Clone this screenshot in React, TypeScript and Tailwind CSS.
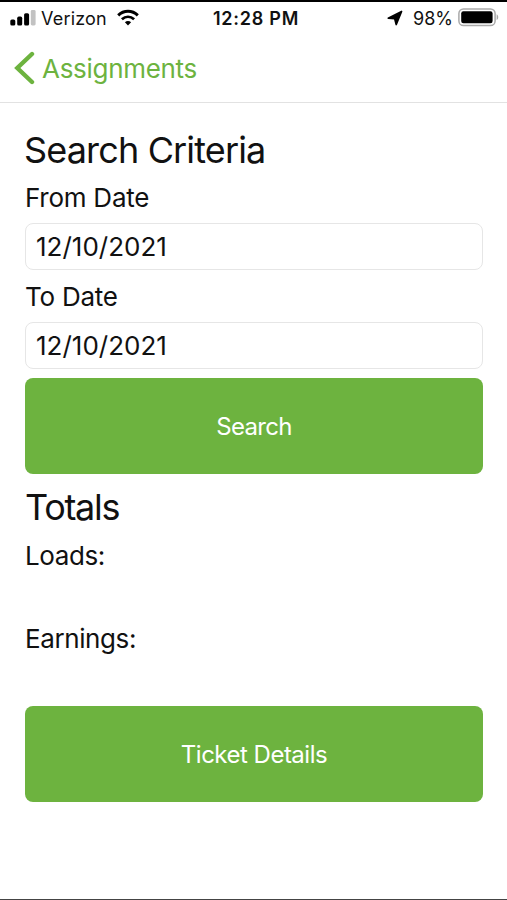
function SignalIcon() {
  return (
    <svg width="26" height="17" viewBox="0 0 26 17" aria-hidden="true">
      <rect x="0.3" y="10.5" width="5" height="6" rx="1.6" fill="#000" />
      <rect x="7.2" y="7.6" width="5" height="8.9" rx="1.6" fill="#000" />
      <rect x="14.1" y="4.2" width="5" height="12.3" rx="1.6" fill="#000" />
      <rect x="20.8" y="1" width="4.8" height="15.5" rx="1.4" fill="#c2c2c2" />
    </svg>
  );
}

function WifiIcon() {
  return (
    <svg width="22" height="17" viewBox="0 0 22 17" fill="none" aria-hidden="true">
      <path d="M1.2 6.4C6.9 1 15.1 1 20.8 6.4" stroke="#000" strokeWidth="3" />
      <path d="M4.9 10.3C8.6 7 13.4 7 17.1 10.3" stroke="#000" strokeWidth="2.8" />
      <path d="M7.9 13.2C9.8 11.7 12.2 11.7 14.1 13.2L11 16.4Z" fill="#000" />
    </svg>
  );
}

function LocationIcon() {
  return (
    <svg width="16" height="16" viewBox="0 0 16 16" aria-hidden="true">
      <path d="M14.6 1.4L1.2 8.2L7.6 8.6L9.2 14.6Z" fill="#000" stroke="#000" strokeWidth="1.6" strokeLinejoin="round" />
    </svg>
  );
}

function BatteryIcon() {
  return (
    <svg width="41" height="19" viewBox="0 0 41 19" fill="none" aria-hidden="true">
      <rect x="0.9" y="0.9" width="36.2" height="16.6" rx="4.6" stroke="#a9a9a9" strokeWidth="1.5" />
      <rect x="3.2" y="3.2" width="31.4" height="12" rx="2.2" fill="#000" />
      <path d="M38.6 6.2C40.8 7 40.8 11.2 38.6 12Z" fill="#a9a9a9" />
    </svg>
  );
}

function StatusBar() {
  return (
    <div className="flex h-[34px] items-center border-t-2 border-black text-lg leading-none">
      <div className="flex flex-1 items-center pl-[10px]">
        <span className="pb-[2px]">
          <SignalIcon />
        </span>
        <span className="ml-[5px] pt-[2px] tracking-[0.2px]">Verizon</span>
        <span className="ml-[10px] pb-[2px]">
          <WifiIcon />
        </span>
      </div>
      <span className="pt-[2px] pl-[3px] font-semibold tracking-[0.75px]">12:28 PM</span>
      <div className="flex flex-1 items-center justify-end pr-[8px]">
        <LocationIcon />
        <span className="ml-[10px] pt-[2px]">98%</span>
        <span className="ml-[5px] pb-px">
          <BatteryIcon />
        </span>
      </div>
    </div>
  );
}

function DateField({ label, value, labelClass }: { label: string; value: string; labelClass: string }) {
  return (
    <label className="block">
      <span className={`flex items-center tracking-[-0.25px] ${labelClass}`}>{label}</span>
      <input
        type="text"
        defaultValue={value}
        className="block h-[47px] w-full rounded-lg border border-[#e6e6e6] bg-white px-[10px] pb-px outline-none"
      />
    </label>
  );
}

export default function App() {
  return (
    <div className="flex h-[900px] w-full flex-col border-b border-[#444] bg-white font-['Inter',sans-serif] text-[#111]">
      <StatusBar />

      {/* Navigation bar */}
      <header className="flex h-[69px] items-center border-b border-[#e2e2e2] pl-[14px] text-[#6db33f]">
        <button className="flex items-center text-[26px] leading-none">
          <svg width="21" height="34" viewBox="0 0 21 34" fill="none" aria-hidden="true">
            <path d="M18 3L3.3 17L18 31" stroke="currentColor" strokeWidth="4.4" strokeLinecap="round" />
          </svg>
          <span className="ml-[7px] pt-px tracking-[-0.3px]">Assignments</span>
        </button>
      </header>

      <main className="flex flex-col pt-6 pr-6 pl-[25px] text-[26px] leading-none">
        <h1 className="-ml-px flex h-[46px] items-center text-4xl leading-none tracking-[-0.85px]">Search Criteria</h1>
        <DateField label="From Date" value="12/10/2021" labelClass="h-[50px]" />
        <DateField label="To Date" value="12/10/2021" labelClass="h-[52px] pt-px" />
        <button className="mt-[9px] h-24 rounded-lg bg-[#6db33f] pt-[2px] text-2xl leading-none tracking-[-0.7px] text-white">
          Search
        </button>

        <h2 className="mt-[10px] flex h-[47px] items-center pb-px text-4xl leading-none tracking-[-1.3px]">Totals</h2>
        <p className="flex h-[49px] items-center tracking-[-0.4px]">Loads:</p>
        <p className="mt-[34px] flex h-[49px] items-center tracking-[-0.4px]">Earnings:</p>
        <button className="mt-[43px] h-24 rounded-lg bg-[#6db33f] pt-[2px] text-2xl leading-none tracking-[-0.5px] text-white">
          Ticket Details
        </button>
      </main>
    </div>
  );
}
